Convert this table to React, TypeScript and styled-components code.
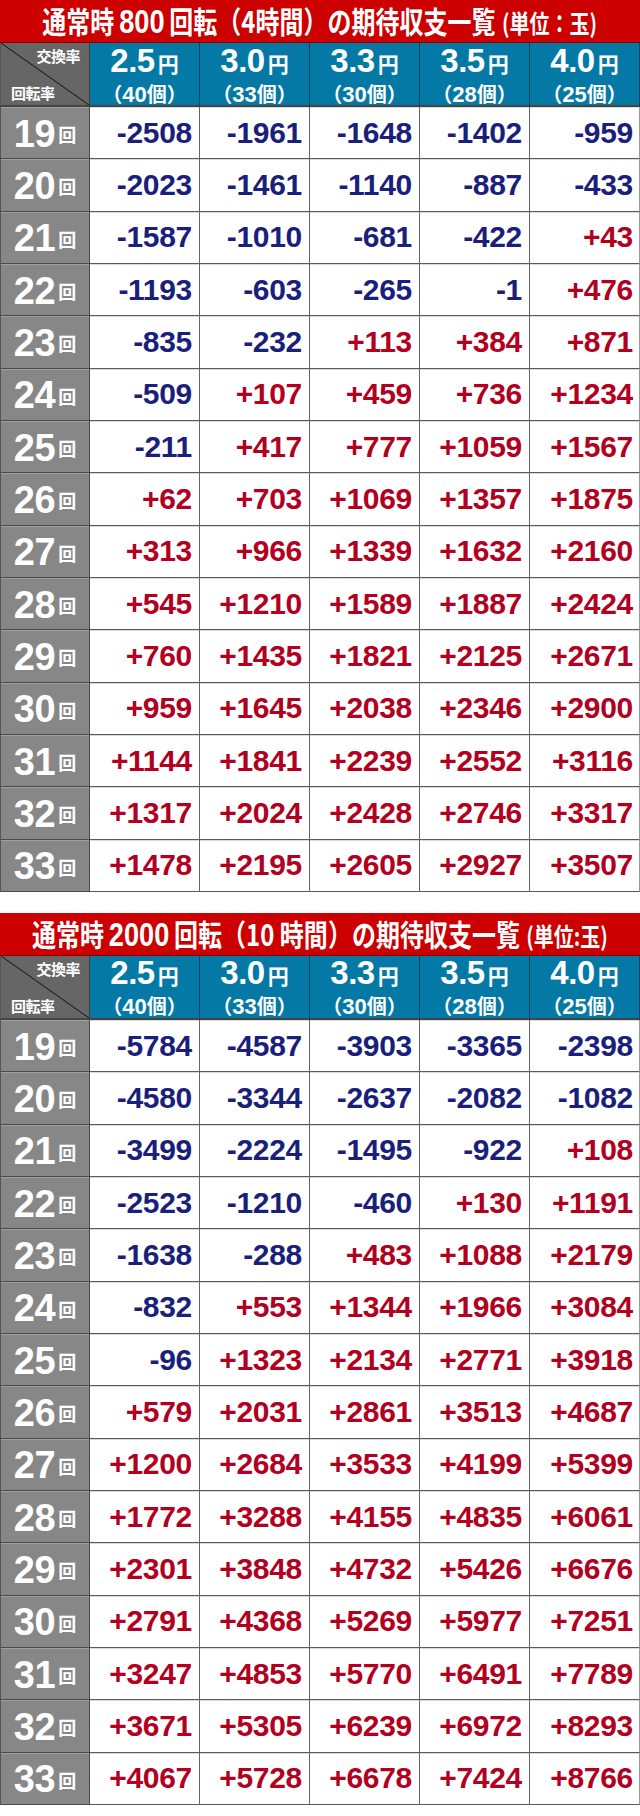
import React from "react";
import styled, { createGlobalStyle } from "styled-components";

const GlobalStyle = createGlobalStyle`
  *, *::before, *::after { box-sizing: border-box; }
  html, body { margin: 0; padding: 0; background: #ffffff; }
  body {
    width: 640px;
    font-family: "Liberation Sans", "Noto Sans CJK JP", sans-serif;
    overflow-x: hidden;
  }
`;

const Page = styled.main`
  width: 640px;
  display: flex;
  flex-direction: column;
  gap: 21px;
  padding-bottom: 12px;
`;

const TableBlock = styled.section`
  display: grid;
  grid-template-columns: 90px repeat(5, 110px);
  grid-template-rows: 43px 64px repeat(15, 52.33px);
`;

const Title = styled.h2`
  grid-column: 1 / -1;
  margin: 0;
  background: #cc0000;
  color: #ffffff;
  display: flex;
  align-items: center;
  justify-content: center;
  font-family: "Noto Sans CJK JP", sans-serif;
  font-weight: 700;
  font-size: 30px;
  line-height: 1;
  white-space: nowrap;
  border-bottom: 1px solid #8a0000;
`;

const TitleText = styled.span`
  display: inline-block;
  flex-shrink: 0;
  transform: scaleX(0.8);
`;

const TitleNum = styled.span`
  font-family: "Liberation Sans", sans-serif;
  font-size: 34px;
  margin: 0 6px;
`;

const TitleUnit = styled.span`
  font-size: 25px;
  margin-left: 8px;
`;

const Corner = styled.div`
  background: linear-gradient(
    to top right,
    #666666 calc(50% - 0.9px),
    #161616 50%,
    #666666 calc(50% + 0.9px)
  );
  display: flex;
  flex-direction: column;
  justify-content: space-between;
  padding: 5px 9px 5px 10px;
  border-right: 1px solid #3f3f3f;
  border-bottom: 2px solid #444444;
  border-left: 1px solid #555555;
  color: #ffffff;
  font-family: "Noto Sans CJK JP", sans-serif;
  font-weight: 700;
  font-size: 15px;
  line-height: 1;
`;

const CornerLabel = styled.span<{ $end?: boolean }>`
  align-self: ${(p) => (p.$end ? "flex-end" : "flex-start")};
  letter-spacing: -0.5px;
`;

const RateHead = styled.div`
  background: #0479a5;
  color: #ffffff;
  display: flex;
  flex-direction: column;
  align-items: center;
  justify-content: center;
  gap: 7px;
  border-right: 1px solid #0b3f5c;
  border-bottom: 2px solid #444444;
  padding-top: 1px;
`;

const RateLine = styled.div`
  display: flex;
  align-items: baseline;
  line-height: 1;
`;

const RateValue = styled.span`
  font-family: "Liberation Sans", sans-serif;
  font-weight: 700;
  font-size: 33px;
  letter-spacing: -0.5px;
`;

const Yen = styled.span`
  font-family: "Noto Sans CJK JP", sans-serif;
  font-weight: 700;
  font-size: 21px;
  margin-left: 3px;
`;

const Balls = styled.div`
  font-family: "Noto Sans CJK JP", sans-serif;
  font-weight: 700;
  font-size: 20px;
  line-height: 1;
`;

const BallsNum = styled.span`
  font-family: "Liberation Sans", sans-serif;
  font-size: 22px;
`;

const Label = styled.div`
  background: #878787;
  color: #ffffff;
  display: flex;
  align-items: center;
  justify-content: center;
  border-left: 1px solid #555555;
  border-right: 1px solid #4a4a4a;
  border-bottom: 1px solid #4a4a4a;
  box-shadow: inset 0 1px 0 rgba(255, 255, 255, 0.22);
  padding-top: 3px;
`;

const LabelNum = styled.span`
  font-family: "Liberation Sans", sans-serif;
  font-weight: 700;
  font-size: 38px;
  letter-spacing: -0.5px;
`;

const LabelUnit = styled.span`
  font-family: "Noto Sans CJK JP", sans-serif;
  font-weight: 700;
  font-size: 18px;
  margin-left: 3px;
`;

const Cell = styled.div<{ $neg: boolean; $last: boolean }>`
  background: #ffffff;
  color: ${(p) => (p.$neg ? "#1b1f7c" : "#b2001f")};
  font-family: "Liberation Sans", sans-serif;
  font-weight: 700;
  font-size: 30px;
  display: flex;
  align-items: center;
  justify-content: flex-end;
  padding-right: ${(p) => (p.$last ? "6px" : "7px")};
  border-right: 1px solid ${(p) => (p.$last ? "#9a9a9a" : "#666666")};
  border-bottom: 1px solid #5a5a5a;
  box-shadow: inset 0 1px 0 #dadada;
  letter-spacing: -0.3px;
`;

type Rate = { value: string; balls: string };

const rates: Rate[] = [
  { value: "2.5", balls: "40" },
  { value: "3.0", balls: "33" },
  { value: "3.3", balls: "30" },
  { value: "3.5", balls: "28" },
  { value: "4.0", balls: "25" },
];

const spins = [19, 20, 21, 22, 23, 24, 25, 26, 27, 28, 29, 30, 31, 32, 33];

const table800: number[][] = [
  [-2508, -1961, -1648, -1402, -959],
  [-2023, -1461, -1140, -887, -433],
  [-1587, -1010, -681, -422, 43],
  [-1193, -603, -265, -1, 476],
  [-835, -232, 113, 384, 871],
  [-509, 107, 459, 736, 1234],
  [-211, 417, 777, 1059, 1567],
  [62, 703, 1069, 1357, 1875],
  [313, 966, 1339, 1632, 2160],
  [545, 1210, 1589, 1887, 2424],
  [760, 1435, 1821, 2125, 2671],
  [959, 1645, 2038, 2346, 2900],
  [1144, 1841, 2239, 2552, 3116],
  [1317, 2024, 2428, 2746, 3317],
  [1478, 2195, 2605, 2927, 3507],
];

const table2000: number[][] = [
  [-5784, -4587, -3903, -3365, -2398],
  [-4580, -3344, -2637, -2082, -1082],
  [-3499, -2224, -1495, -922, 108],
  [-2523, -1210, -460, 130, 1191],
  [-1638, -288, 483, 1088, 2179],
  [-832, 553, 1344, 1966, 3084],
  [-96, 1323, 2134, 2771, 3918],
  [579, 2031, 2861, 3513, 4687],
  [1200, 2684, 3533, 4199, 5399],
  [1772, 3288, 4155, 4835, 6061],
  [2301, 3848, 4732, 5426, 6676],
  [2791, 4368, 5269, 5977, 7251],
  [3247, 4853, 5770, 6491, 7789],
  [3671, 5305, 6239, 6972, 8293],
  [4067, 5728, 6678, 7424, 8766],
];

const fmt = (n: number) => (n < 0 ? `-${Math.abs(n)}` : `+${n}`);

type TableProps = {
  spinsText: string;
  hoursText: string;
  unitText: string;
  data: number[][];
};

const ExpectTable: React.FC<TableProps> = ({ spinsText, hoursText, unitText, data }) => (
  <TableBlock>
    <Title>
      <TitleText>
        通常時<TitleNum>{spinsText}</TitleNum>回転（{hoursText}）の期待収支一覧
        <TitleUnit>{unitText}</TitleUnit>
      </TitleText>
    </Title>
    <Corner>
      <CornerLabel $end>交換率</CornerLabel>
      <CornerLabel>回転率</CornerLabel>
    </Corner>
    {rates.map((r) => (
      <RateHead key={r.value}>
        <RateLine>
          <RateValue>{r.value}</RateValue>
          <Yen>円</Yen>
        </RateLine>
        <Balls>
          （<BallsNum>{r.balls}</BallsNum>個）
        </Balls>
      </RateHead>
    ))}
    {spins.map((s, i) => (
      <React.Fragment key={s}>
        <Label>
          <LabelNum>{s}</LabelNum>
          <LabelUnit>回</LabelUnit>
        </Label>
        {data[i].map((v, j) => (
          <Cell key={j} $neg={v < 0} $last={j === 4}>
            {fmt(v)}
          </Cell>
        ))}
      </React.Fragment>
    ))}
  </TableBlock>
);

export default function App() {
  return (
    <>
      <GlobalStyle />
      <Page>
        <ExpectTable spinsText="800" hoursText="4時間" unitText="(単位：玉)" data={table800} />
        <ExpectTable spinsText="2000" hoursText="10 時間" unitText="(単位:玉)" data={table2000} />
      </Page>
    </>
  );
}
